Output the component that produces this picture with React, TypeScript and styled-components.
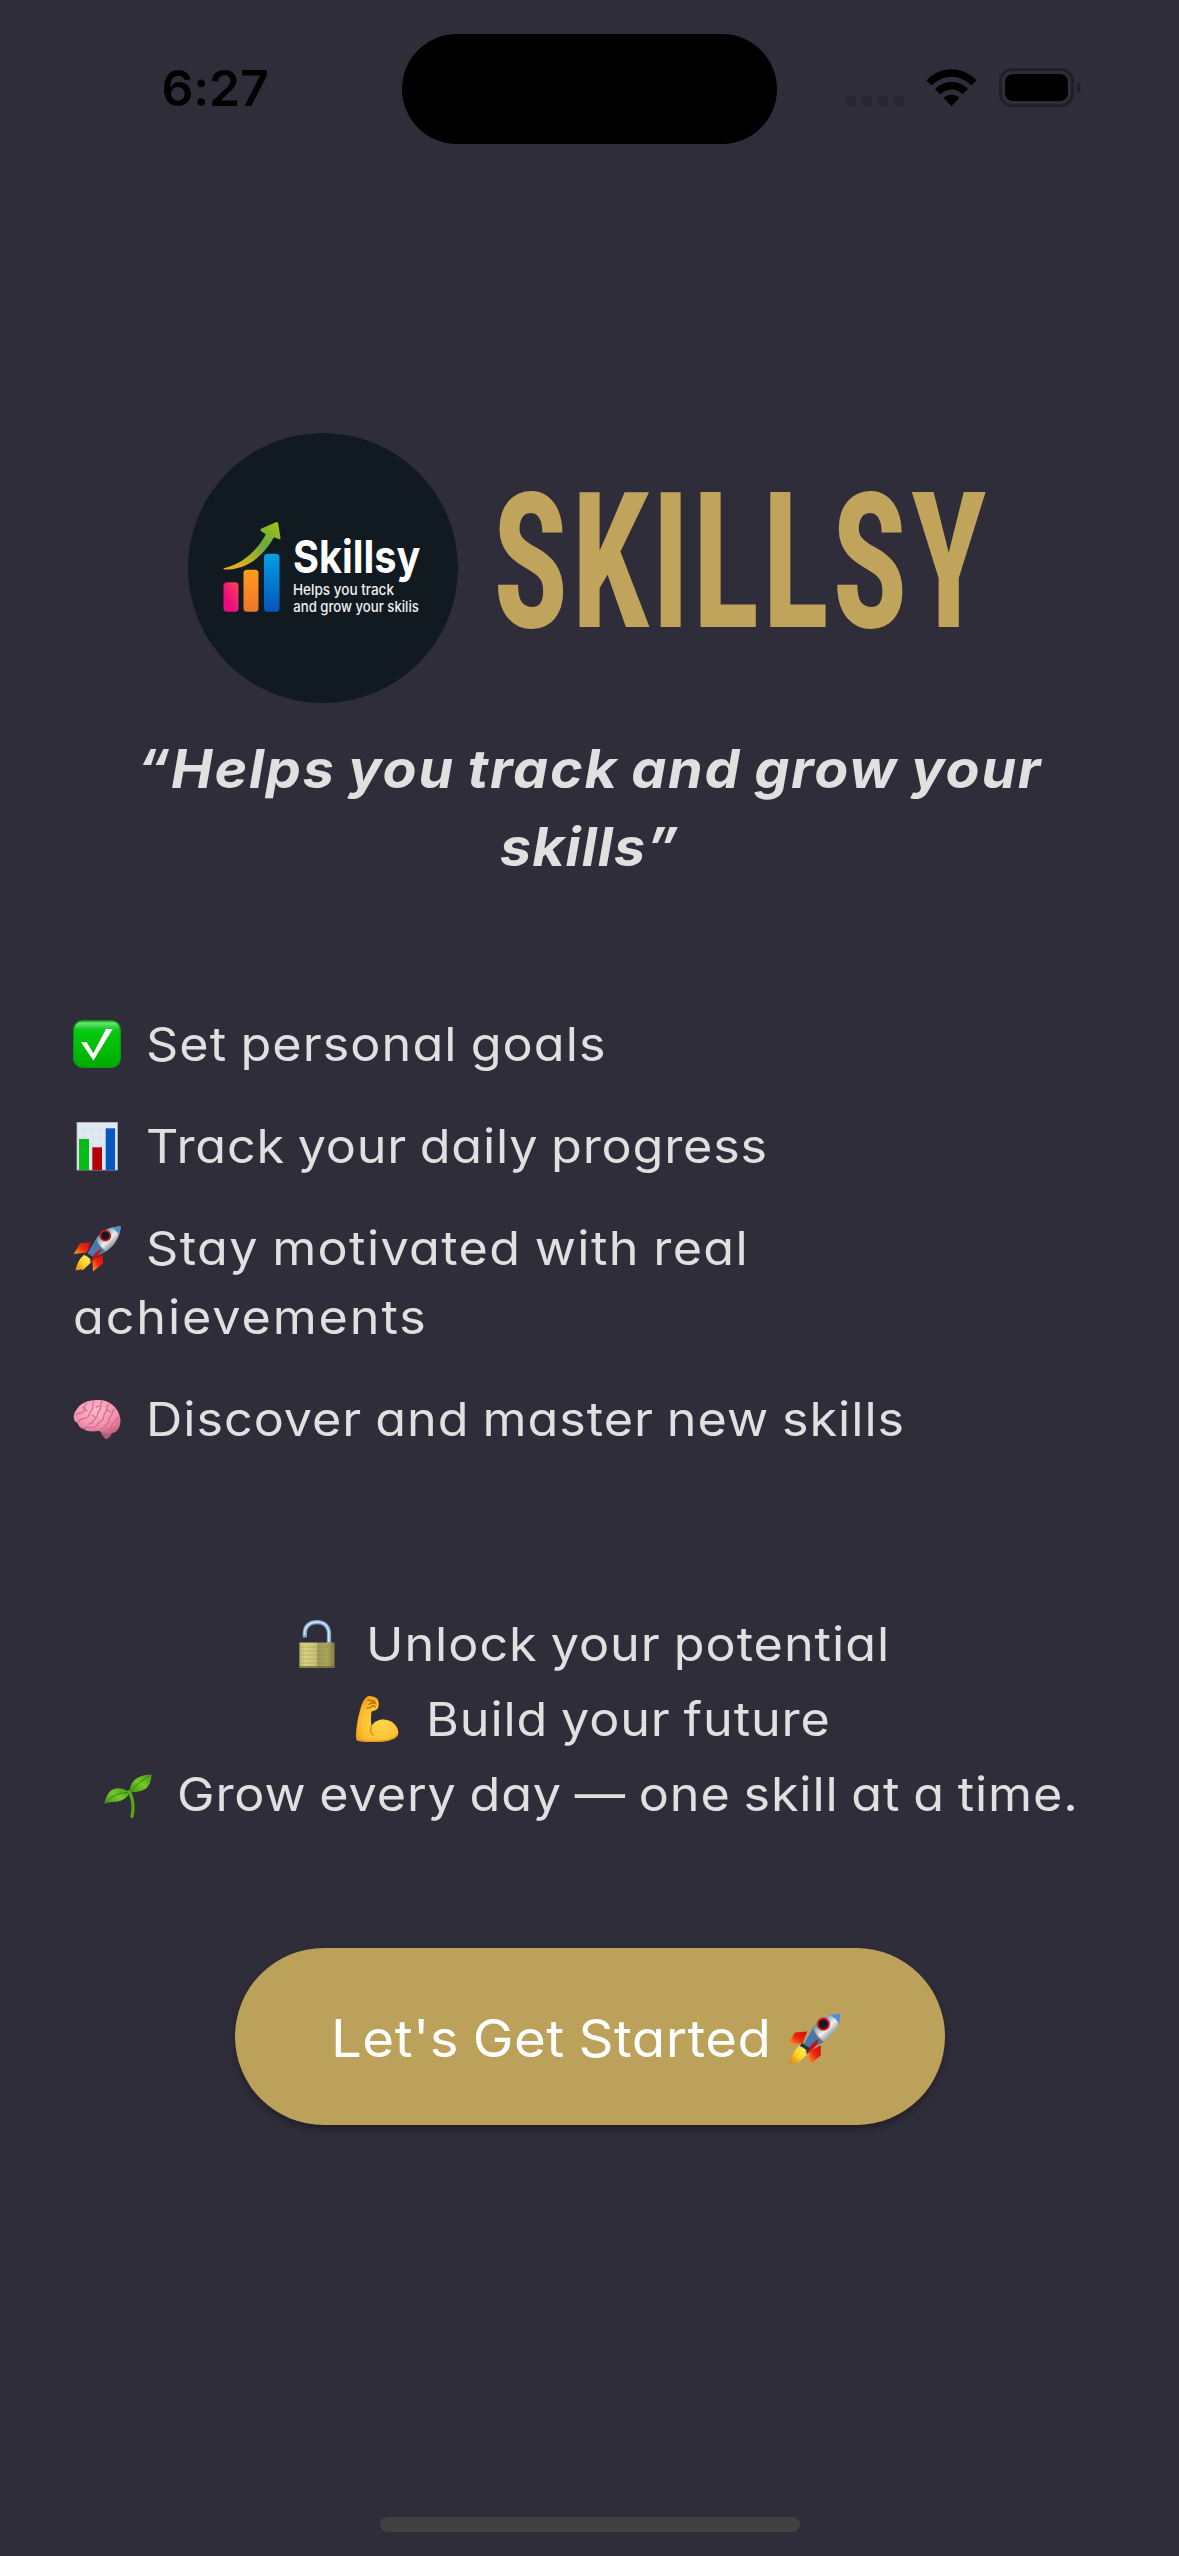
import React from "react";
import styled, { createGlobalStyle } from "styled-components";

const GlobalStyle = createGlobalStyle`
  *, *::before, *::after { box-sizing: border-box; }
  body {
    margin: 0;
    background: #302d3a;
    color: #e0e0e0;
    font-family: Inter, "Open Sans", sans-serif;
  }
`;

const Screen = styled.div`
  display: flex;
  flex-direction: column;
  width: 1179px;
  height: 2556px;
  overflow: hidden;
  background: #302d3a;
`;

/* ---------- status bar ---------- */

const StatusBar = styled.header`
  display: grid;
  grid-template-columns: 402px 375px 402px;
  height: 177px;
  padding-top: 33.5px;
`;

const Clock = styled.time`
  padding: 0 0 0 161.5px;
  height: 110px;
  color: #000;
  font-size: 50px;
  font-weight: 600;
  letter-spacing: -0.2px;
  line-height: 109px;
`;

const Island = styled.div`
  height: 110.5px;
  border-radius: 56px;
  background: #000;
`;

const Indicators = styled.div`
  display: flex;
  align-items: flex-end;
  height: 73.5px;
  padding-left: 69px;
`;

const SignalDots = styled.div`
  display: flex;
  gap: 6px;
  margin: 0 22px 1px 0;
`;

const Dot = styled.i`
  width: 10px;
  height: 10px;
  border-radius: 3.5px;
  background: #272530;
`;

const WifiGlyph = styled.svg`
  width: 51px;
  height: 38px;
  margin-right: 22px;
`;

const BatteryGlyph = styled.svg`
  width: 83px;
  height: 39px;
`;

/* ---------- content ---------- */

const Content = styled.main`
  display: flex;
  flex: 1;
  flex-direction: column;
  align-items: center;
  padding: 256px 73px 0;
`;

const Brand = styled.div`
  display: flex;
  align-self: stretch;
  align-items: center;
  gap: 35px;
  height: 270px;
  padding-left: 115.2px;
`;

const LogoBadge = styled.svg`
  flex: none;
  width: 270px;
  height: 270px;
`;

const Wordmark = styled.h1`
  width: 500px;
  margin: 0;
  color: #c0a45b;
  font: 700 189px/230px "Roboto Condensed", Roboto, sans-serif;
  letter-spacing: 4px;
  white-space: nowrap;
  transform: translateY(-5.5px) scaleX(0.74);
  transform-origin: 0 50%;
`;

const Tagline = styled.p`
  margin: 26.7px 0 0;
  font-size: 53px;
  font-style: italic;
  font-weight: 700;
  font-feature-settings: "cv11";
  line-height: 78px;
  text-align: center;
  white-space: nowrap;
`;

/* Text drawn slightly extended; $extra reserves the width that the stretch adds. */
const Line = styled.span<{ $spacing: number; $stretch?: number; $extra?: number }>`
  display: inline-block;
  margin-right: ${(p) => p.$extra ?? 0}px;
  letter-spacing: ${(p) => p.$spacing}px;
  word-spacing: -2px;
  white-space: pre;
  transform: scaleX(${(p) => p.$stretch ?? 1.07});
  transform-origin: 0 50%;
`;

const FeatureList = styled.ul`
  display: flex;
  flex-direction: column;
  align-self: stretch;
  gap: 33px;
  margin: 123.8px 0 0;
  padding: 0;
  list-style: none;
  font-size: 47px;
  font-feature-settings: "cv11";
  line-height: 69px;
`;

const Feature = styled.li``;

const Pledge = styled.div`
  display: flex;
  flex-direction: column;
  align-items: center;
  margin-top: 152.9px;
  padding-left: 4px;
  font-size: 47px;
  font-feature-settings: "cv11";
  line-height: 75px;
`;

const PledgeRow = styled.div`
  height: 75px;
  white-space: nowrap;
`;

const Emoji = styled.svg<{ $size?: number; $gap?: number }>`
  width: ${(p) => p.$size ?? 48}px;
  height: ${(p) => p.$size ?? 48}px;
  margin-right: ${(p) => p.$gap ?? 25}px;
  vertical-align: ${(p) => (p.$size ? -8 : -7)}px;
  overflow: visible;
`;

const StartButton = styled.button`
  width: 710px;
  height: 177.5px;
  margin: 116.6px 0 0;
  padding: 3px 0 0 96px;
  border: 0;
  border-radius: 89px;
  background: #bca15a;
  box-shadow: 0 6px 7px -2px rgba(0, 0, 0, 0.22), 0 3px 9px rgba(0, 0, 0, 0.14);
  color: #fff;
  font: 400 52px/81px Inter, "Open Sans", sans-serif;
  font-feature-settings: "cv11";
  text-align: left;
  white-space: nowrap;
`;

const HomeIndicator = styled.div`
  align-self: center;
  width: 420px;
  height: 15px;
  margin-bottom: 24px;
  border-radius: 8px;
  background: #414042;
`;

/* ---------- emoji drawings, all on a 48 unit box ---------- */

type EmojiProps = { size?: number; gap?: number };

const CheckEmoji = () => (
  <Emoji viewBox="0 0 48 48" role="img" aria-label="✅">
    <defs>
      <linearGradient id="ck" x1="0" y1="0" x2="0" y2="1">
        <stop offset="0" stopColor="#12a51a" />
        <stop offset="0.05" stopColor="#6fe27a" />
        <stop offset="0.2" stopColor="#08c914" />
        <stop offset="0.6" stopColor="#00bd06" />
        <stop offset="1" stopColor="#00a804" />
      </linearGradient>
    </defs>
    <rect x="0.6" y="0.6" width="46.8" height="46.8" rx="9" fill="url(#ck)" stroke="#089a10" strokeWidth="1.2" />
    <path d="M8 22.3H13.8L20.3 33.2L33 9H39.7L20.4 40.5Z" fill="#fff" />
  </Emoji>
);

const ChartEmoji = () => (
  <Emoji viewBox="0 0 48 48" role="img" aria-label="📊">
    <rect x="4" y="0.4" width="40.4" height="47.6" fill="#dfe9f2" stroke="#b9b4bd" strokeWidth="0.8" />
    <path d="M4 8H44M4 16H44M4 24H44M4 32H44M4 40H44M12 1V48M20 1V48M28 1V48M36 1V48" stroke="#cfdeea" strokeWidth="0.7" />
    <rect x="6" y="17" width="10" height="31" fill="#06bb16" />
    <rect x="19.3" y="25.3" width="9.7" height="22.7" fill="#b80306" />
    <rect x="32.7" y="6.3" width="9.4" height="41.7" fill="#0757bd" />
  </Emoji>
);

const RocketEmoji = ({ size, gap }: EmojiProps) => (
  <Emoji viewBox="0 0 48 48" $size={size} $gap={gap} role="img" aria-label="🚀">
    <defs>
      <linearGradient id="rk-body" x1="0.25" y1="0.25" x2="0.75" y2="0.75">
        <stop offset="0" stopColor="#3f78b4" />
        <stop offset="0.3" stopColor="#9db9d0" />
        <stop offset="0.55" stopColor="#eef0ec" />
        <stop offset="0.8" stopColor="#a3a9aa" />
        <stop offset="1" stopColor="#6d7880" />
      </linearGradient>
      <linearGradient id="rk-fin" x1="1" y1="0" x2="0" y2="1">
        <stop offset="0" stopColor="#c80d0d" />
        <stop offset="0.5" stopColor="#f02611" />
        <stop offset="1" stopColor="#ffab1f" />
      </linearGradient>
      <linearGradient id="rk-fire" x1="1" y1="0" x2="0" y2="1">
        <stop offset="0" stopColor="#fff27a" />
        <stop offset="0.55" stopColor="#ffd21f" />
        <stop offset="1" stopColor="#e87a12" />
      </linearGradient>
    </defs>
    <path d="M18 18.3L7 19.2L0.8 30L14 28.5Z" fill="url(#rk-fin)" />
    <path d="M30 30.5V39.5L20 47.6L19.5 36Z" fill="url(#rk-fin)" />
    <path d="M12.5 30C7.5 33 4.5 38 2.4 46.6L8 45.6L10 46L18.5 38Z" fill="url(#rk-fire)" />
    <path d="M47.6 2.4C36 2.8 29 6.5 24 13.5L14.8 29.5L20 34.3L33 27.3C41 22 46.6 14 47.6 2.4Z" fill="url(#rk-body)" />
    <path d="M47.6 2.4C43.5 2.4 40.5 3 38 3.8C42 5.5 45 8.5 46 11.8C47 8.8 47.5 5.6 47.6 2.4Z" fill="#5490cd" />
    <path d="M24 13.5L14.8 29.5L20 34.3L33 27.3C28 24 25 19.5 24 13.5Z" fill="#4679ad" />
    <path d="M24 15.5C25.5 20.5 28.5 24.2 33 26.8" stroke="#c5ad63" strokeWidth="0.9" fill="none" />
    <circle cx="32.3" cy="11.7" r="5" fill="#17191d" stroke="#d01820" strokeWidth="1.8" />
    <path d="M28.2 24.8C23 27.5 18.5 32.5 17 39L20 36.2C24.5 33 27.5 29.5 28.2 24.8Z" fill="#c91414" />
    <path d="M13.2 28.3L20.5 33.2L17.8 37L11.5 31Z" fill="#29303a" />
    <path d="M13 31.5L17.6 35.2L9.5 42.3Z" fill="#ffe548" />
  </Emoji>
);

const BrainEmoji = () => (
  <Emoji viewBox="0 0 48 48" role="img" aria-label="🧠">
    <defs>
      <radialGradient id="br" cx="0.45" cy="0.3" r="0.75">
        <stop offset="0" stopColor="#ffb9cb" />
        <stop offset="0.65" stopColor="#f390ad" />
        <stop offset="1" stopColor="#c96485" />
      </radialGradient>
    </defs>
    <path d="M26 32C27 38 30 41 32.5 44.3C36.500 43.5 39 40 40 33Z" fill="#b45c6e" />
    <path d="M24 5C35 4 46 11.5 47.4 24C48 31 45 37 39.5 38C34 39.5 30 37.5 26 36C20 36.5 14 37 11 34C7 33.5 5.5 30.5 4.5 28C0 27 -0.5 20 3 15.5C6.5 9 14 5 24 5Z" fill="url(#br)" />
    <g fill="none" stroke="#cb6a8b" strokeWidth="1.1" strokeLinecap="round">
      <path d="M13 8.5C10 12 13 14 10 17C7 19 5 17 3 20" />
      <path d="M21 6C18 10 22 12 18 16C15 20 17 22 13 23C9 24 7 24 5 27" />
      <path d="M29 6C26 9 30 12 26 16C23 19 26 21 22 24C19 26 21 29 15 29" />
      <path d="M36 9C32 12 36 15 32 18C29 21 33 23 28 26C24 28 26 31 21 32C17 33 14 31 11 33" />
      <path d="M42 14C38 15 41 20 37 22C34 24 38 27 34 29C31 31 31 34 27 35" />
      <path d="M46 22C42 22 44 27 40 28C37 30 41 33 36 35" />
      <path d="M10 12L14 16M23 12L27 11M33 15L38 17M19 20L22 22" />
    </g>
  </Emoji>
);

const LockEmoji = () => (
  <Emoji viewBox="0 0 48 48" role="img" aria-label="🔓">
    <defs>
      <linearGradient id="lk" x1="0" y1="0" x2="1" y2="0">
        <stop offset="0" stopColor="#bdb668" />
        <stop offset="0.15" stopColor="#d8d384" />
        <stop offset="0.48" stopColor="#c6c074" />
        <stop offset="0.52" stopColor="#a09a55" />
        <stop offset="0.8" stopColor="#aaa45e" />
        <stop offset="1" stopColor="#817b40" />
      </linearGradient>
    </defs>
    <path d="M11.8 17.5V14C11.8 6 16.5 2.2 24 2.2C31.500 2.2 36 6.5 36 14V23" fill="none" stroke="#86a9cd" strokeWidth="4.2" />
    <path d="M11.5 15V13C12 6 17 2 24 2C30 2 35 5 35.8 12V22" fill="none" stroke="#d5e5f5" strokeWidth="1.5" />
    <rect x="6.4" y="22.5" width="35.2" height="25.5" rx="0.8" fill="url(#lk)" />
    <path d="M6.4 27H41.6M6.4 31H41.6M6.4 35H41.6M6.4 39H41.6M6.4 43H41.6" stroke="#8e8848" strokeWidth="0.6" opacity="0.6" />
    <path d="M6.4 47H41.6" stroke="#6f6738" strokeWidth="1.6" />
  </Emoji>
);

const ArmEmoji = () => (
  <Emoji viewBox="0 0 48 48" role="img" aria-label="💪">
    <defs>
      <radialGradient id="am" cx="0.6" cy="0.6" r="0.65">
        <stop offset="0" stopColor="#ffd44d" />
        <stop offset="0.7" stopColor="#ffc12f" />
        <stop offset="1" stopColor="#f3a01b" />
      </radialGradient>
    </defs>
    <path d="M14.5 1.4C17 0.5 21.5 1.5 24 3.5C26 6 26.2 10 25 13C23.5 15.5 20.5 16 18.5 16.5C18 21 17.5 25 18.5 31C21 26.5 25.5 24.3 31 24.5C39 25 45.3 31 45.3 37.5C45.3 42.5 40 44.5 35 45.7C29 47.2 9 47.3 4 45.5C2 43 3.5 28 6.5 17.5C8 11 10 4 14.5 1.4Z" fill="url(#am)" />
    <path d="M18.5 31C17 34 17.5 38 20 40" fill="none" stroke="#e08f16" strokeWidth="1.5" strokeLinecap="round" />
    <path d="M15 5L22 6.5M16 9.5C18 7.5 21 7.5 23 9M14 13C17 13.5 18 12 20 10.5L22.5 12" fill="none" stroke="#b86a0e" strokeWidth="1.3" strokeLinecap="round" />
    <path d="M5 45.3C14 46.6 27 46.6 35 45C39 44 43 42.5 44.5 39.5" fill="none" stroke="#e8981b" strokeWidth="1.4" />
  </Emoji>
);

const SeedlingEmoji = () => (
  <Emoji viewBox="0 0 48 48" role="img" aria-label="🌱">
    <defs>
      <linearGradient id="sd" x1="0" y1="1" x2="1" y2="0">
        <stop offset="0" stopColor="#3f9a11" />
        <stop offset="0.5" stopColor="#74c727" />
        <stop offset="1" stopColor="#43a012" />
      </linearGradient>
    </defs>
    <path d="M25.5 21.5C29 29 30 38 28 46.500" fill="none" stroke="#56a81a" strokeWidth="3.2" strokeLinecap="round" />
    <path d="M26 22C25.5 12 33 4.5 47.6 4.7C46.5 12 46 23 26 22Z" fill="url(#sd)" />
    <path d="M26 22.5C14 15 3.5 17 0.5 34C7 29.5 18 36 26 22.5Z" fill="url(#sd)" />
    <path d="M27 21C32 15 38 10 46 5.5M24 22.5C16 22.5 7 26 1.5 33" fill="none" stroke="#2f8409" strokeWidth="0.9" />
  </Emoji>
);

/* ---------- brand logo ---------- */

const Logo = () => (
  <LogoBadge viewBox="0 0 270 270">
    <defs>
      <linearGradient id="lg-pink" x1="1" y1="0" x2="0" y2="1">
        <stop offset="0" stopColor="#ff4554" />
        <stop offset="0.7" stopColor="#ea0a82" />
      </linearGradient>
      <linearGradient id="lg-orange" x1="0" y1="0" x2="0" y2="1">
        <stop offset="0" stopColor="#ff9d18" />
        <stop offset="1" stopColor="#ec752c" />
      </linearGradient>
      <linearGradient id="lg-blue" x1="0" y1="0" x2="0" y2="1">
        <stop offset="0" stopColor="#049fe4" />
        <stop offset="1" stopColor="#0455b8" />
      </linearGradient>
      <linearGradient id="lg-arrow" x1="0" y1="1" x2="1" y2="0">
        <stop offset="0.08" stopColor="#f3ab17" />
        <stop offset="0.35" stopColor="#b1b32a" />
        <stop offset="0.6" stopColor="#67aa3c" />
        <stop offset="1" stopColor="#a9c513" />
      </linearGradient>
    </defs>
    <circle cx="135" cy="135" r="135" fill="#111a20" />
    <rect x="35.5" y="149.3" width="15" height="29.4" rx="3.5" fill="url(#lg-pink)" />
    <rect x="55.5" y="136.7" width="15" height="42" rx="3.5" fill="url(#lg-orange)" />
    <rect x="76" y="120.7" width="15.5" height="58" rx="3.5" fill="url(#lg-blue)" />
    <path d="M35.7 135.2C54 131 68 119 77.8 101.5L73 98Q71.5 96.5 73.5 95.5L88 89.2Q89.8 88.5 90.2 90.5L92.5 105Q92.5 107 90.5 106L86 104.3C74 125 58 136.5 37 136.6Q34.8 136.3 35.7 135.2Z" fill="url(#lg-arrow)" />
    <g fontFamily="Inter, 'Open Sans', sans-serif">
      <text x="105" y="140.3" fill="#fff" fontSize="45" fontWeight="650" textLength="127.5" lengthAdjust="spacingAndGlyphs">Skillsy</text>
      <text x="105" y="162.3" fill="#f2f2f2" fontSize="14.8" fontWeight="500" textLength="101" lengthAdjust="spacingAndGlyphs">Helps you track</text>
      <text x="105.3" y="179.3" fill="#f2f2f2" fontSize="14.8" fontWeight="500" textLength="125.5" lengthAdjust="spacingAndGlyphs">and grow your skilis</text>
    </g>
  </LogoBadge>
);

export default function App() {
  return (
    <>
      <GlobalStyle />
      <Screen>
        <StatusBar>
          <Clock>6:27</Clock>
          <Island />
          <Indicators>
            <SignalDots>
              <Dot />
              <Dot />
              <Dot />
              <Dot />
            </SignalDots>
            <WifiGlyph viewBox="0 0 51 38">
              <path d="M0.5 11.5C14 -3.5 37 -3.5 50.5 11.5L45.3 16.5C34 4.8 17 4.8 5.7 16.5Z" />
              <path d="M9 20C18 10.5 33 10.5 42 20L36.8 25.3C30 19 21 19 14.2 25.3Z" />
              <path d="M17.7 29C22 24.6 29 24.6 33.3 29L25.5 37.3Z" />
            </WifiGlyph>
            <BatteryGlyph viewBox="0 0 83 39">
              <rect x="1.5" y="1.5" width="72" height="36" rx="11.5" fill="none" stroke="#201f26" strokeWidth="3" />
              <rect x="6" y="6" width="63" height="27" rx="8" />
              <path d="M78 13.5C83.3 15.5 83.3 23.5 78 25.5Z" fill="#201f26" />
            </BatteryGlyph>
          </Indicators>
        </StatusBar>

        <Content>
          <Brand>
            <Logo />
            <Wordmark>SKILLSY</Wordmark>
          </Brand>

          <Tagline>
            <Line $spacing={1.67} $stretch={1.05} $extra={42}>“Helps you track and grow your</Line>
            <br />
            <Line $spacing={1} $stretch={1.05} $extra={8}>skills”</Line>
          </Tagline>

          <FeatureList>
            <Feature>
              <CheckEmoji />
              <Line $spacing={1.02}>Set personal goals</Line>
            </Feature>
            <Feature>
              <ChartEmoji />
              <Line $spacing={0.75}>Track your daily progress</Line>
            </Feature>
            <Feature>
              <RocketEmoji />
              <Line $spacing={1.28}>Stay motivated with real</Line>
              <br />
              <Line $spacing={1.77}>achievements</Line>
            </Feature>
            <Feature>
              <BrainEmoji />
              <Line $spacing={0.91}>Discover and master new skills</Line>
            </Feature>
          </FeatureList>

          <Pledge>
            <PledgeRow>
              <LockEmoji />
              <Line $spacing={0.92} $extra={34}>Unlock your potential</Line>
            </PledgeRow>
            <PledgeRow>
              <ArmEmoji />
              <Line $spacing={0.82} $extra={26.5}>Build your future</Line>
            </PledgeRow>
            <PledgeRow>
              <SeedlingEmoji />
              <Line $spacing={0.81} $extra={59}>Grow every day — one skill at a time.</Line>
            </PledgeRow>
          </Pledge>

          <StartButton>
            <Line $spacing={0.45} $stretch={1.05} $extra={36.5}>Let's Get Started</Line>
            <RocketEmoji size={54} gap={0} />
          </StartButton>
        </Content>

        <HomeIndicator />
      </Screen>
    </>
  );
}
